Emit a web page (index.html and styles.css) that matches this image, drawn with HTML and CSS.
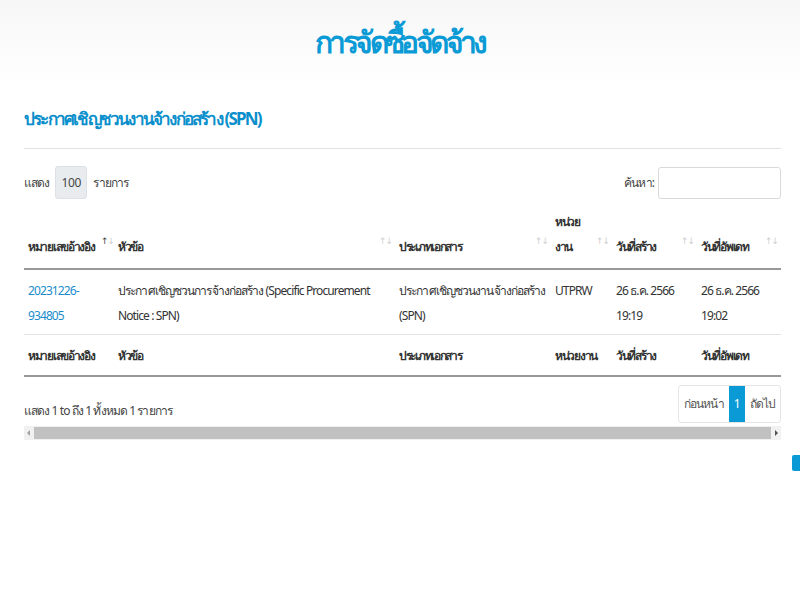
FILE: index.html
```html
<!DOCTYPE html>
<html lang="th">
<head>
  <meta charset="UTF-8">
  <title>การจัดซื้อจัดจ้าง</title>
  <link rel="stylesheet" href="styles.css">
</head>
<body>

  <div class="banner">
    <h1>การจัดซื้อจัดจ้าง</h1>
  </div>

  <div class="content">
    <h2 class="section-title">ประกาศเชิญชวนงานจ้างก่อสร้าง (SPN)</h2>

    <div class="tools">
      <div class="length">
        แสดง <span class="length-box">100</span> รายการ
      </div>
      <div class="search">
        ค้นหา: <span class="search-box"></span>
      </div>
    </div>

    <table class="list">
      <colgroup>
        <col class="c1"><col class="c2"><col class="c3"><col class="c4"><col class="c5"><col class="c6">
      </colgroup>
      <thead>
        <tr>
          <th>หมายเลขอ้างอิง <span class="sort on">↑<i>↓</i></span></th>
          <th>หัวข้อ <span class="sort">↑↓</span></th>
          <th>ประเภทเอกสาร <span class="sort">↑↓</span></th>
          <th>หน่วย<br>งาน <span class="sort">↑↓</span></th>
          <th>วันที่สร้าง <span class="sort">↑↓</span></th>
          <th>วันที่อัพเดท <span class="sort">↑↓</span></th>
        </tr>
      </thead>
      <tbody>
        <tr>
          <td><a href="#">20231226-<br>934805</a></td>
          <td>ประกาศเชิญชวนการจ้างก่อสร้าง (Specific Procurement Notice : SPN)</td>
          <td>ประกาศเชิญชวนงานจ้างก่อสร้าง (SPN)</td>
          <td>UTPRW</td>
          <td>26 ธ.ค. 2566<br>19:19</td>
          <td>26 ธ.ค. 2566<br>19:02</td>
        </tr>
      </tbody>
      <tfoot>
        <tr>
          <th>หมายเลขอ้างอิง</th>
          <th>หัวข้อ</th>
          <th>ประเภทเอกสาร</th>
          <th>หน่วยงาน</th>
          <th>วันที่สร้าง</th>
          <th>วันที่อัพเดท</th>
        </tr>
      </tfoot>
    </table>

    <div class="bottom">
      <div class="info">แสดง 1 to ถึง 1 ทั้งหมด 1 รายการ</div>
      <div class="pager">
        <span class="pg">ก่อนหน้า</span>
        <span class="pg current">1</span>
        <span class="pg">ถัดไป</span>
      </div>
    </div>

    <div class="hscroll">
      <span class="arrow left"></span>
      <span class="thumb"></span>
      <span class="arrow right"></span>
    </div>
  </div>

  <div class="to-top"></div>

</body>
</html>
```

FILE: styles.css
```css
body {
  margin: 0;
  font-family: "Noto Sans", "DejaVu Sans", sans-serif;
  font-size: 12px;
  letter-spacing: -0.9px;
  color: #333;
  background: #fff;
}
.banner {
  background: linear-gradient(to bottom, #f7f7f7, #fff);
  height: 88px;
  text-align: center;
}
.banner h1 {
  margin: 0;
  padding-top: 20px;
  font-size: 30px;
  line-height: 44px;
  color: #0a9ad5;
  font-weight: 800;
  letter-spacing: -3.6px;
}
.content {
  margin: 0 19px 0 24px;
  position: relative;
}
.section-title {
  margin: 16px 0 0;
  font-size: 17px;
  line-height: 30px;
  color: #0a8fcc;
  font-weight: bold;
  letter-spacing: -1.8px;
  padding-bottom: 14px;
  border-bottom: 1px solid #e2e2e2;
}
.tools {
  display: flex;
  justify-content: space-between;
  align-items: center;
  margin-top: 17px;
}
.length, .search {
  display: flex;
  align-items: center;
  gap: 4px;
  color: #444;
}
.length-box {
  display: inline-block;
  width: 20px;
  height: 31px;
  line-height: 31px;
  padding: 0 5px;
  background: #e9ecef;
  border: 1px solid #dde1e5;
  border-radius: 3px;
  margin: 0 2px;
  letter-spacing: -0.3px;
}
.search-box {
  display: inline-block;
  width: 121px;
  height: 30px;
  border: 1px solid #d9d9d9;
  border-radius: 3px;
}
.list {
  width: 100%;
  table-layout: fixed;
  border-collapse: collapse;
  margin-top: 4px;
}
.list th, .list td {
  text-align: left;
  padding: 6px 4px 6px 4px;
  vertical-align: bottom;
  line-height: 25px;
}
.list th {
  font-weight: bold;
  color: #333;
  position: relative;
  padding-right: 14px;
  white-space: nowrap;
  letter-spacing: -1.3px;
}
.list thead th {
  border-bottom: 2px solid #999;
  height: 50px;
  padding-bottom: 9px;
}
.list td {
  vertical-align: top;
  padding-top: 8px;
  padding-bottom: 6px;
  border-bottom: 1px solid #e3e3e3;
}
.list td a {
  color: #1a8ccc;
  text-decoration: none;
}
.list tfoot th {
  border-bottom: 2px solid #999;
  padding-top: 8px;
  padding-bottom: 7px;
}
.sort {
  position: absolute;
  right: 3px;
  bottom: 22px;
  font-size: 9px;
  font-weight: normal;
  color: #cfcfcf;
  line-height: 10px;
  letter-spacing: -1px;
}
.sort.on {
  right: 0;
  color: #444;
}
.sort.on i {
  font-style: normal;
  color: #cfcfcf;
}
.c1 { width: 90px; }
.c2 { width: 281px; }
.c3 { width: 156px; }
.c4 { width: 61px; }
.c5 { width: 85px; }
.c6 { width: 84px; }
.bottom {
  display: flex;
  justify-content: space-between;
  align-items: center;
  margin-top: 8px;
}
.info {
  padding-top: 12px;
  color: #444;
}
.pager {
  display: flex;
  border: 1px solid #e6e6e6;
  border-radius: 3px;
  height: 36px;
}
.pg {
  padding: 0 5px;
  line-height: 36px;
  color: #555;
}
.pg.current {
  background: #0a9ad5;
  color: #fff;
}
.hscroll {
  display: flex;
  align-items: center;
  height: 14px;
  margin-top: 3px;
  background: #f1f1f1;
}
.thumb {
  flex: 1;
  height: 12px;
  background: #c1c1c1;
}
.arrow {
  width: 10px;
  height: 14px;
  position: relative;
}
.arrow::after {
  content: "";
  position: absolute;
  top: 4px;
  border-top: 3px solid transparent;
  border-bottom: 3px solid transparent;
}
.arrow.left::after {
  left: 3px;
  border-right: 3px solid #a3a3a3;
}
.arrow.right::after {
  left: 4px;
  border-left: 3px solid #505050;
}
.to-top {
  position: fixed;
  right: 0;
  top: 455px;
  width: 8px;
  height: 16px;
  background: #0a9ad5;
  border-radius: 2px 0 0 2px;
}
```
